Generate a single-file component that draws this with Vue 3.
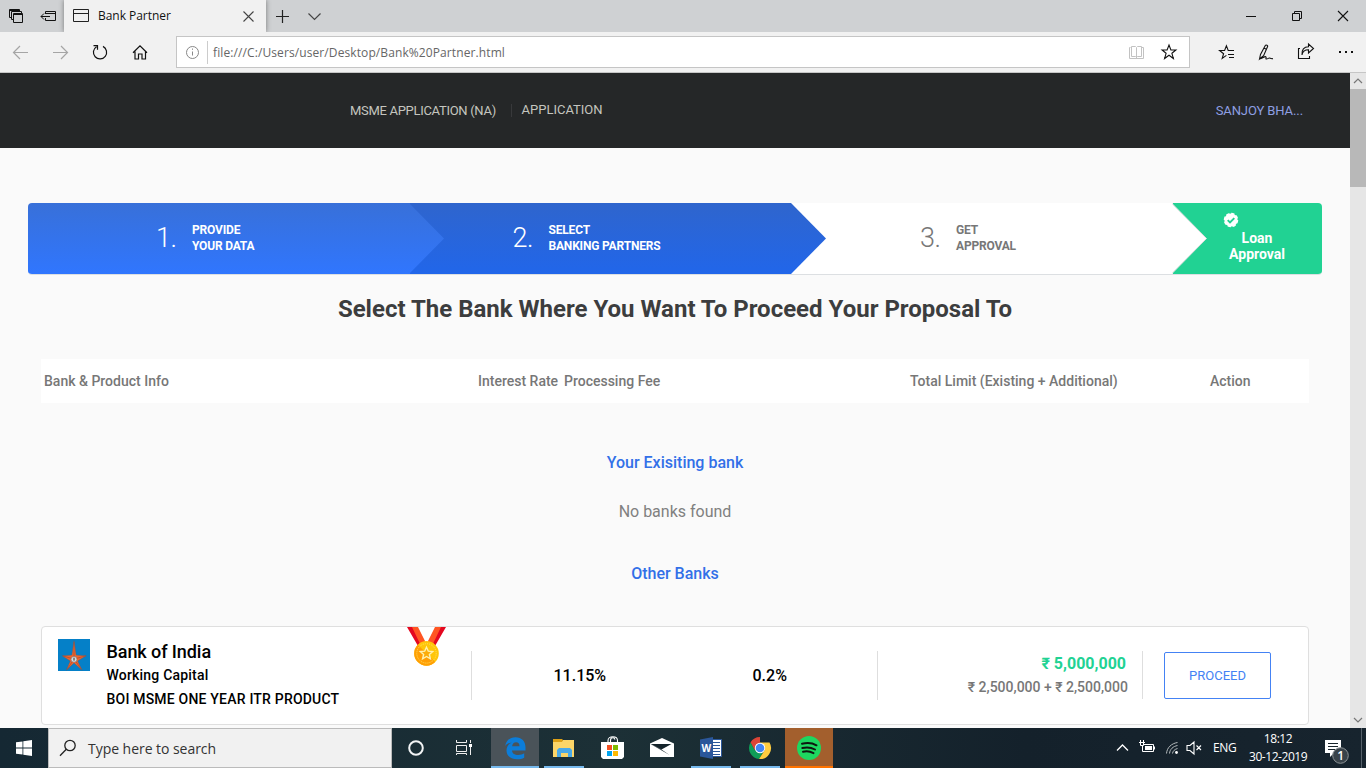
<script setup>
const steps = [
  { n: '1.', a: 'PROVIDE', b: 'YOUR DATA', cls: 'one' },
  { n: '2.', a: 'SELECT', b: 'BANKING PARTNERS', cls: 'two' },
  { n: '3.', a: 'GET', b: 'APPROVAL', cls: 'three' },
]
</script>

<template>
  <div class="screen">
    <header class="titlebar">
      <div class="tabtools">
        <svg width="64" height="32" fill="none" stroke="#111">
          <path d="M11.500 17.500h-2v-8h10v2M9 10.500h11M13.500 19.500h-2v-8h10v2M13.500 13.500h9v9h-9zM13.500 14.500h9" />
          <path d="M45.500 14v-2.500h10v9h-10V18M45 13.500h11M41 16.500h9M44 13.500l-3 3 3 3" />
        </svg>
      </div>
      <div class="tab">
        <svg width="16" height="14" fill="none" stroke="#222"><path d="M.5.500h15v12H.5zM0 4.500h16" /></svg>
        <span class="ui tabname">Bank Partner</span>
        <svg class="tabx" width="11" height="11" fill="none" stroke="#444" stroke-width="1.100"><path d="M.5.500l10 10M10.500.500l-10 10" /></svg>
      </div>
      <svg width="60" height="32" fill="none" stroke="#222">
        <path d="M10 16.500h13M16.500 10v13" stroke-width="1.200" /><path d="M42.500 13.500l6 6 6-6" stroke="#444" stroke-width="1.200" />
      </svg>
      <svg class="winctl" width="126" height="32" fill="none" stroke="#111">
        <path d="M10 16.500h10M56.500 13.500h7v7h-7zM58.500 13v-1.500h7v7h-2" transform="translate(-4)" /><path d="M98 11l10 10M108 11l-10 10" stroke-width="1.100" />
      </svg>
    </header>

    <nav class="toolbar">
      <svg width="176" height="40" fill="none" stroke="#111" stroke-width="1.200">
        <g stroke="#a5a5a5"><path d="M13.500 20.500H28M20 14l-6.500 6.500L20 27M53 20.500h14.500M61 14l6.500 6.500L61 27" /></g>
        <path d="M103 14.400a6.600 6.600 0 1 1-6.500.300M93.500 13.700h4v4" />
        <path d="M133 20.700l7-6.900 7 6.900M135 19.500V27h3.500v-5h3.500v5h3.500v-7.500" />
      </svg>
      <div class="address">
        <svg width="32" height="30" fill="none" stroke="#888">
          <circle cx="15.500" cy="15.500" r="6" /><path d="M15.500 14.500v4M15.500 11.500v1.300" /><path d="M30.500 4v23" stroke="#ccc" />
        </svg>
        <span class="ui url">file:///C:/Users/user/Desktop/Bank%20Partner.html</span>
        <svg class="addricons" width="60" height="30" fill="none">
          <path d="M8.500 10.500l-1 0v11h14v-11h-2M14.500 11v10M9.500 9.500h4l1 1 1-1h4v10h-4l-1 1-1-1h-4z" stroke="#c2c2c2" />
          <path d="M47 8l1.900 5h5l-4 3.300 1.500 5.200-4.400-3.200-4.400 3.200 1.500-5.200-4-3.300h5z" stroke="#111" stroke-width="1.100" />
        </svg>
      </div>
      <svg width="176" height="40" fill="none" stroke="#111" stroke-width="1.100">
        <path d="M43 18.500h-4.800l-1.800-4.700-1.800 4.700h-5l4 3.200-1.400 4.700 4.200-3M38 18.500h6M38 22.500h6M39 25.500h5" />
        <path d="M69.500 27l1-4.500 4.800-9c.6-1 2.800-.2 2.300 1l-4 9.200zM73.500 16l2.500 1M69.500 27c3-.5 5-3 6.200-2.300s-.7 2.300.800 2.300 2-1.200 3-1 1.300 1 3.500.600" />
        <path d="M110 16.500h-1.500v10h11V24M112 23c.500-4 3-5.300 6.500-5.300V21l5-4.500-5-4.500v2.700c-4.500 0-7 3-6.500 8.300z" />
        <path d="M149 20h2M155 20h2M161 20h2" stroke-width="2" />
      </svg>
    </nav>

    <main class="viewport">
      <div class="page">
        <div class="sitehead">
          <span class="na">MSME APPLICATION (NA)</span>
          <i class="divline"></i>
          <span class="app">APPLICATION</span>
          <span class="user">SANJOY BHA...</span>
        </div>

        <div class="steps">
          <div v-for="s in steps" :key="s.n" class="step" :class="s.cls">
            <span class="num">{{ s.n }}</span>
            <span class="label">{{ s.a }}<br />{{ s.b }}</span>
            <svg class="arrow" width="36" height="71" viewBox="0 0 36 71">
              <defs>
                <linearGradient id="g-one" x1="0" y1="0" x2="0" y2="1"><stop offset="0" stop-color="#3870d9" /><stop offset="1" stop-color="#3076fe" /></linearGradient>
                <linearGradient id="g-two" x1="0" y1="0" x2="0" y2="1"><stop offset="0" stop-color="#2f65cd" /><stop offset="1" stop-color="#2166ea" /></linearGradient>
              </defs>
              <path v-if="s.cls === 'one'" d="M0 0L35 35.500 0 71z" fill="url(#g-one)" />
              <path v-else-if="s.cls === 'two'" d="M0 0L35 35.500 0 71z" fill="url(#g-two)" />
              <path v-else d="M-1 -.5L34.500 35.500-1 71.500" fill="#fff" stroke="#dedede" />
            </svg>
          </div>
          <div class="loan">
            <svg width="16" height="16" viewBox="0 0 16 16"><circle cx="8" cy="8" r="6.600" fill="#fff" stroke="#fff" stroke-width="1.300" stroke-dasharray="3.400 1.780" /><path d="M4.700 8.200l2.300 2.300 4.300-4.400" fill="none" stroke="#21d293" stroke-width="1.900" /></svg>
            <b>Loan<br />Approval</b>
          </div>
        </div>

        <h1>Select The Bank Where You Want To Proceed Your Proposal To</h1>

        <div class="thead">
          <span class="c1">Bank &amp; Product Info</span>
          <span class="c2">Interest Rate</span>
          <span class="c3">Processing Fee</span>
          <span class="c4">Total Limit (Existing + Additional)</span>
          <span class="c5">Action</span>
        </div>

        <h2 class="existing">Your Exisiting bank</h2>
        <p class="none">No banks found</p>
        <h2 class="other">Other Banks</h2>

        <section class="card">
          <svg class="logo" width="32" height="32" viewBox="0 0 32 32">
            <path fill="#0580c8" d="M0 0h32v32H0z" />
            <path fill="#f0642c" stroke="#4e6377" stroke-width=".5" d="M16 1.500l2.200 14.600 10 .6-8.500 5.300 4.400 9.300-8.100-7.200-7.700 7.200 3.900-9.300L4 16.700l9.800-.6z" />
            <path stroke="#a84b32" stroke-width=".7" d="M16 3v17l12-3.200M16 20l7.500 10.500M16 20l-7 10.500M16 20L5 17" fill="none" />
            <circle cx="16" cy="20.300" r="2.900" fill="#d4dadd" stroke="#69747b" stroke-width=".5" /><path d="M16 18.500v3.500M15 20h2" stroke="#555" stroke-width=".8" />
          </svg>
          <div class="bank">
            <div class="bname">Bank of India</div>
            <div class="bsub">Working Capital</div>
            <div class="bprod">BOI MSME ONE YEAR ITR PRODUCT</div>
          </div>
          <svg class="medal" width="40" height="40" viewBox="0 0 40 40">
            <path fill="#e4071f" d="M0 0h6l12 19h-7zM39 0h-6L21 19h7z" />
            <path fill="#ff5522" d="M5 0h6l7 14-1 4-3 1zM34 0h-6l-7 14 1 4 3 1z" />
            <circle cx="19.500" cy="26.400" r="12.300" fill="#ffc60a" /><path d="M10.800 17.700a12.300 12.300 0 0 0 17.400 17.400z" fill="#ff9f05" />
            <circle cx="19.500" cy="26.400" r="9.700" fill="none" stroke="#ffe35e" stroke-dasharray="1 1" />
            <path d="M19.500 20.200l1.800 4 4.400.400-3.300 2.900 1 4.300-3.900-2.300-3.900 2.300 1-4.300-3.300-2.900 4.400-.4z" fill="#fcad0b" stroke="#fff2b1" stroke-width="1.400" />
          </svg>
          <div class="rates"><span class="r1">11.15%</span><span class="r2">0.2%</span></div>
          <div class="limit"><div class="total">₹ 5,000,000</div><div class="split">₹ 2,500,000 + ₹ 2,500,000</div></div>
          <button class="proceed">PROCEED</button>
        </section>
      </div>
      <aside class="scroll">
        <svg width="16" height="16" fill="none" stroke="#777" stroke-width="1.200"><path d="M4 10l4-4 4 4" /></svg>
        <div class="thumb"></div>
        <svg class="down" width="16" height="16" fill="none" stroke="#777" stroke-width="1.200"><path d="M4 6l4 4 4-4" /></svg>
      </aside>
    </main>

    <footer class="taskbar">
      <div class="start">
        <svg width="16" height="16" viewBox="0 0 16 16" fill="#fff"><path d="M0 2.300L6.500 1.400v6.200H0zM7.300 1.200L16 0v7.600H7.300zM0 8.400h6.500v6.200L0 13.700zM7.300 8.400H16V16l-8.700-1.200z" /></svg>
      </div>
      <div class="search">
        <svg width="18" height="18" fill="none" stroke="#222" stroke-width="1.300"><circle cx="11" cy="6.500" r="5.200" /><path d="M7.300 10.300L1 16.700" /></svg>
        <span class="ui">Type here to search</span>
      </div>
      <div class="cell"><svg width="48" height="40"><circle cx="24" cy="20" r="6.800" fill="none" stroke="#f2f4f5" stroke-width="2" /></svg></div>
      <div class="cell"><svg width="48" height="40" fill="none" stroke="#eee"><path d="M16.500 12v2.500h10V12M16.500 17.500h10v6h-10zM16.500 27v-1.500h10V27M30.500 12v3M30.500 19v8" /><path d="M29 16h3v3h-3z" fill="#fff" stroke="none" /></svg></div>
      <div class="cell edge"><svg width="48" height="40"><path fill="#0c7dd9" d="M14.200 18c.8-5.500 4.800-8.800 10.300-8.800 6.300 0 10 4.200 10 10v3.200H21c.200 3 2.800 4.500 6.200 4.500 2.300 0 4.400-.6 6-1.600v4.400c-2 1.100-4.300 1.500-7 1.500-6.300 0-10.700-3.300-10.700-8.800 0-3.600 2-6.500 5.300-8-3 .5-5.200 1.600-6.600 3.600zm6.900.3h7.400c0-2.600-1.100-4-3.400-4-2.200 0-3.600 1.500-4 4z" /></svg></div>
      <div class="cell line"><svg width="48" height="40"><path fill="#fcd568" d="M13 13h9l1-1h11v17H13z" /><path fill="#dfa116" d="M13 11h9l1 1-1 2h-9z" /><path fill="#4aa9e8" d="M17 22l2-2h11l2 2v7h-4v-4h-7v4h-4z" /></svg></div>
      <div class="cell"><svg width="48" height="40"><path d="M19 14.500v-2c0-5 9.500-5 9.500 0v2M21.500 14.500v-2c0-4 4-3 4.500-1" fill="none" stroke="#fff" stroke-width="1.100" /><path fill="#fff" d="M12 14h23v15l-2 2H14l-2-2z" /><path fill="#f25022" d="M18 17h5v5h-5z" /><path fill="#7fba00" d="M24 17h5v5h-5z" /><path fill="#00a4ef" d="M18 23h5v5h-5z" /><path fill="#ffb900" d="M24 23h5v5h-5z" /></svg></div>
      <div class="cell"><svg width="48" height="40"><path fill="#fff" d="M12 15.500l12-5.500 12 5.500V29H12z" /><path d="M12.500 16h21l-10 5.500 8 5.500z" fill="#14232a" /><path d="M12.500 16L24 22l4-2" fill="none" stroke="#fff" stroke-width="1" opacity=".2" /></svg></div>
      <div class="cell line"><svg width="48" height="40"><path fill="#fff" stroke="#2b579a" d="M25 11.500h9.500v17H25z" /><path stroke="#2b579a" d="M26 14.500h7M26 17.500h7M26 20.500h7M26 23.500h7M26 26.500h7" /><path fill="#2b579a" d="M13 11.500L26 9v22l-13-2.500z" /><text x="14.500" y="24" fill="#fff" font-family="Open Sans, sans-serif" font-size="10" font-weight="700">W</text></svg></div>
      <div class="cell line"><svg width="48" height="40"><path fill="#db4437" d="M24 20V9a11 11 0 0 1 9.500 5.500H24zM24 9a11 11 0 0 0-9.500 5.500L19 23l5-8.500h9.500A11 11 0 0 0 24 9z" /><path fill="#0f9d58" d="M14.500 14.500A11 11 0 0 0 23 31l5.500-9L24 20l-5 2.500z" /><path fill="#ffcd40" d="M24 14.500h9.500A11 11 0 0 1 23 31l5.500-8.500z" /><circle cx="24" cy="20" r="5.200" fill="#fff" /><circle cx="24" cy="20" r="4.300" fill="#4285f4" /></svg></div>
      <div class="cell spotify"><svg width="48" height="40"><circle cx="24" cy="20" r="12" fill="#1ed760" /><path d="M17 15.800c5-1.300 10.500-.8 14.500 1.500M17.300 20c4.300-1.100 8.800-.7 12.700 1.500M18 23.800c3.800-.9 7.200-.4 10.500 1.300" fill="none" stroke="#0d1710" stroke-width="2" stroke-linecap="round" /></svg></div>

      <div class="tray">
        <svg width="94" height="40" fill="none" stroke="#fff">
          <path d="M7 22.500l5.500-5.500 5.500 5.500" stroke-width="1.300" />
          <path d="M34 16.500h9.500v7h-11v-2M44.500 18.500v3" /><path d="M35 18h7v4h-7z" fill="#fff" stroke="none" /><path d="M29 14.500h6M30.500 12v2M33.500 12v2M30.500 15v2.500h3V15M32.500 18v5" />
          <path d="M56.500 25.500c.5-6 5-10 11-11M59.500 25.500c.5-4.500 3.500-7 8-8M62.500 25.500c.4-2.600 2.200-4.200 5-5" stroke="#b6bcbe" /><circle cx="66.500" cy="24.500" r="1.400" fill="#fff" stroke="none" />
          <path d="M77 17.500h3l4-3.500v12l-4-3.500h-3zM86.500 17.500l4.500 4.500M91 17.500l-4.500 4.500" stroke-width="1.100" />
        </svg>
        <span class="ui eng">ENG</span>
        <div class="clock ui"><span class="time">18:12</span><span class="date">30-12-2019</span></div>
        <svg class="notice" width="46" height="40">
          <path fill="#fff" d="M5 12h16v13h-7l-4 4v-4H5z" /><path d="M8 15.500h10M8 18.500h10M8 21.500h7" stroke="#18242b" />
          <circle cx="20.500" cy="27.500" r="7.800" fill="#39434a" stroke="#8c9295" /><text x="17.200" y="32" fill="#fff" font-family="Open Sans, sans-serif" font-size="12" font-weight="600">1</text>
          <path d="M41.500 0v40" stroke="#56616a" />
        </svg>
      </div>
    </footer>
  </div>
</template>

<style>
html, body { margin: 0; overflow: hidden; }
</style>

<style scoped>
* { box-sizing: border-box; }
svg { display: block; flex: none; }
.screen { width: 1366px; height: 768px; display: flex; flex-direction: column; font-family: Roboto, sans-serif; overflow: hidden; background: #fafafa; }
.ui { font-family: "Open Sans", "Noto Sans", sans-serif; white-space: nowrap; }
.titlebar { height: 32px; display: flex; background: #cfd1d3; flex: none; }
.tabtools { width: 64px; }
.tab { width: 202px; background: #f1f1f1; display: flex; align-items: center; padding-left: 9px; box-shadow: 0 0 5px #777; clip-path: inset(0 -6px 0 -6px); }
.tabname { margin: -2px 0 0 9px; font-size: 12px; letter-spacing: -.04px; color: #111; }
.tabx { margin-left: auto; margin-right: 12px; }
.winctl { margin-left: auto; }
.toolbar { height: 41px; display: flex; background: #f1f1f1; border-bottom: 1px solid #c6c6c6; flex: none; }
.address { width: 1014px; height: 32px; margin-top: 4px; background: #fff; border: 1px solid #c5c5c5; display: flex; align-items: center; }
.url { margin-left: 4px; font-size: 12px; color: #666; letter-spacing: .1px; }
.addricons { margin-left: auto; margin-right: 7px; }
.viewport { height: 655px; display: flex; flex: none; overflow: hidden; }
.page { width: 1350px; background: #fafafa; }
.sitehead { height: 75px; background: #252728; display: flex; align-items: center; font-size: 13px; color: #c4c5bf; white-space: nowrap; }
.na { margin-left: 350px; width: 161px; letter-spacing: -.3px; }
.divline { width: 1px; height: 13px; background: #38393b; }
.app { margin-left: 9.500px; position: relative; top: -1px; }
.user { margin-left: auto; margin-right: 47px; color: #8e9fe2; letter-spacing: -.1px; }
.steps { margin: 55px 28px 0; height: 72px; display: flex; border-bottom: 1px solid #dcdfe2; border-radius: 4px; overflow: hidden; background: #fff; }
.step { width: 381.500px; height: 71px; position: relative; display: flex; align-items: center; color: #fff; }
.one { background: linear-gradient(#3870d9, #3076fe); padding-left: 128px; }
.two { background: linear-gradient(#2f65cd, #2166ea); padding-left: 103px; }
.three { background: #fff; color: #777; padding-left: 129px; }
.arrow { position: absolute; left: calc(100% - .5px); top: 0; z-index: 2; }
.num { width: 36px; font-size: 27px; font-weight: 300; line-height: 32px; letter-spacing: -.4px; padding-bottom: 1px; }
.label { font-size: 12px; line-height: 16px; font-weight: 700; white-space: nowrap; letter-spacing: -.18px; padding-bottom: 2px; }
.loan { flex: 1; background: #21d293; color: #fff; text-align: center; position: relative; padding: 9px 0 0 50px; }
.loan b { display: block; width: 69px; font-size: 14px; line-height: 16px; font-weight: 700; margin-top: 2px; }
h1 { margin: 18px 0 0; height: 32px; line-height: 32px; text-align: center; font-size: 24px; font-weight: 700; color: #3c3d3e; }
.thead { margin: 34px 41px 0; height: 44px; background: #fff; display: flex; align-items: center; color: #777; font-size: 14px; font-weight: 500; white-space: nowrap; }
.c1 { width: 437px; padding-left: 3px; }
.c2 { width: 86px; }
.c3 { width: 346px; }
.c4 { width: 300px; }
h2 { margin: 0; font-size: 16px; font-weight: 500; line-height: 20px; color: #3270e8; text-align: center; }
.existing { margin-top: 50px; }
.none { margin: 29px 0 0; font-size: 16px; line-height: 20px; color: #808080; text-align: center; }
.other { margin-top: 42px; }
.card { margin: 42px 41px 0; height: 99px; background: #fff; border: 1px solid #dfdfdf; border-radius: 4px; display: flex; color: #000; white-space: nowrap; font-weight: 500; }
.logo { margin: 12px 16px 0; }
.bank { width: 300px; padding: 13px 0 0 .5px; }
.bname { font-size: 18px; line-height: 24px; letter-spacing: -.08px; }
.bsub { font-size: 14px; line-height: 22px; letter-spacing: .2px; }
.bprod { font-size: 14px; line-height: 26px; letter-spacing: .2px; }
.medal { margin-left: 1px; }
.rates { margin: 24px 0 0 24px; width: 407px; height: 49px; border: solid #dedede; border-width: 0 1px; display: flex; line-height: 49px; font-size: 16px; }
.r1 { width: 199px; padding-left: 81.500px; }
.r2 { padding-left: 81.500px; }
.limit { margin-top: 24px; width: 265px; height: 48px; border-right: 1px solid #dedede; text-align: right; }
.total { color: #21d293; font-size: 16px; font-weight: 700; line-height: 24px; padding: 1px 16px 0 0; height: 24px; }
.split { color: #777; font-size: 14px; line-height: 24px; padding-right: 14px; }
.proceed { margin: 25px 0 0 21px; padding: 0; width: 107px; height: 47px; background: #fff; border: 1px solid #4482f4; border-radius: 2px; color: #4482f4; font: 13px Roboto, sans-serif; }
.scroll { width: 16px; background: #e6e6e6; display: flex; flex-direction: column; }
.thumb { height: 98px; background: #b8b8b8; }
.down { margin-top: auto; }
.taskbar { height: 40px; display: flex; background: linear-gradient(90deg, #152833, #1c3036 45%, #14212b 75%, #17242e); flex: none; color: #fff; }
.start { width: 48px; display: flex; align-items: center; justify-content: center; }
.search { width: 344px; background: #f1f1f1; border: 1px solid #bbb; display: flex; align-items: center; padding-left: 10px; color: #333; font-size: 14px; }
.search span { margin-left: 11px; letter-spacing: -.04px; }
.cell { width: 48px; margin-right: 1px; position: relative; }
.search + .cell { margin-right: 0; }
.search + .cell + .cell { margin-right: 3px; }
.edge { background: #4a5359; }
.line::after, .edge::after, .spotify::after { content: ""; position: absolute; left: 4px; bottom: 0; width: 40px; height: 2px; background: #76b9ed; }
.edge::after { left: 0; width: 48px; }
.spotify { background: #a35f2d; }
.spotify::after { left: 0; width: 48px; background: #ff7300; }
.tray { margin-left: auto; width: 256px; display: flex; align-items: center; font-size: 12px; }
.eng { width: 36px; margin: -1px 0 0 9px; letter-spacing: -.4px; }
.clock { width: 58px; text-align: center; display: flex; flex-direction: column; line-height: 18px; letter-spacing: -.45px; }
.tray .notice { margin-left: auto; }
</style>
